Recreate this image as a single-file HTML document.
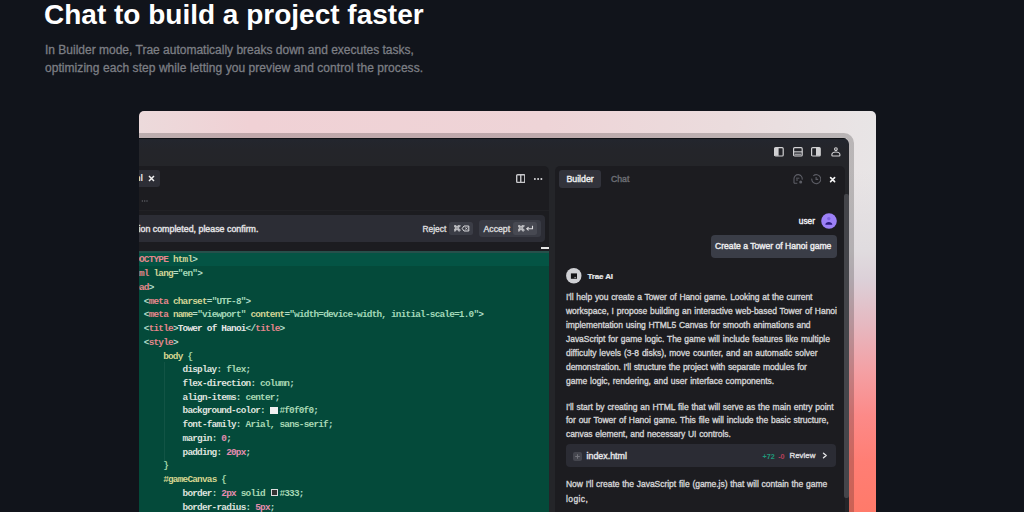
<!DOCTYPE html>
<html><head><meta charset="utf-8">
<style>
*{margin:0;padding:0;box-sizing:border-box}
html,body{width:1024px;height:512px;overflow:hidden;background:#11141b;font-family:"Liberation Sans",sans-serif}
.a{position:absolute}
#h1{left:44px;top:-1px;font-size:28px;font-weight:bold;color:#fff;white-space:nowrap;line-height:32px}
.sub{left:45px;font-size:12px;color:#7c7e84;white-space:nowrap;line-height:14px;-webkit-text-stroke:0.3px #7c7e84}
#card{left:139px;top:111px;width:737px;height:420px;border-radius:5px;overflow:hidden;
 background:linear-gradient(90deg,#ecdadb 0%,#f0d1d5 15%,#eed4d7 55%,#ebdcdd 80%,#e8e5e6 100%);}
#card:after{content:"";position:absolute;left:0;top:0;right:0;bottom:0;
 background:linear-gradient(180deg,rgba(222,218,221,0) 60px,#e0dcdf 139px,#dcd0d8 169px,#e6b8c0 214px,#f4a0a4 260px,#fc8a88 305px,#ff7e74 351px,#ff7a6a 401px)}
#win{left:-30px;top:22px;width:745px;height:420px;border:5px solid rgba(0,0,0,.2);border-radius:10px;z-index:2;background:transparent}
#wi{position:absolute;left:0;top:0;right:0;bottom:0;background:linear-gradient(180deg,#23262e 0,#24252a 12px,#242529 26px);border-radius:6px 6px 0 0;overflow:hidden}
#pg{position:absolute;left:-114px;top:-138px;width:1024px;height:512px}
.pan{position:absolute;background:#1c1c20;border-radius:4px}
.code{position:absolute;font-family:"Liberation Mono",monospace;font-size:9.4px;letter-spacing:-0.78px;font-weight:bold;line-height:13.74px;white-space:pre;color:#d6dad6}
.t{color:#e5868c}.at{color:#d2d596}.s{color:#a3d9b9}.n{color:#e58db0}.p{color:#dfe3df}.v{color:#a8d8b4}.sel{color:#d6d690}.br{color:#9fd4a6}.w{color:#e6e6e6}.g{color:#b0dccb}
.sw1,.sw2{display:inline-block;width:7.4px;height:7.4px;margin:0 1.5px 0 0.7px;vertical-align:-0.6px}
.sw1{background:#f0f0f0}.sw2{background:#333;border:1px solid #ddd}
.chat{position:absolute;left:566px;font-size:8.5px;word-spacing:0.5px;color:#d2d2d4;white-space:nowrap;line-height:11px;-webkit-text-stroke:0.35px #d2d2d4}
.md{-webkit-text-stroke:0.4px currentColor}
.wt{color:#e8e8ea;font-weight:bold}
</style></head><body>
<div id="h1" class="a">Chat to build a project faster</div>
<div class="a sub" style="top:43px">In Builder mode, Trae automatically breaks down and executes tasks,</div>
<div class="a sub" style="top:60.5px;letter-spacing:0.055px">optimizing each step while letting you preview and control the process.</div>

<div id="card" class="a">
 <div id="win" class="a">
  <div id="wi">
   <div id="pg">
    <div class="a" style="left:0;top:138px;width:1024px;height:1px;background:#101216"></div>
    <!-- title bar icons -->
    <svg class="a" style="left:773.5px;top:146.5px" width="10" height="10" viewBox="0 0 10 10"><rect x="0.6" y="0.6" width="8.6" height="8.4" rx="1.1" fill="none" stroke="#d2d2d4" stroke-width="1.2"/><rect x="0.6" y="0.8" width="4" height="8" fill="#cfcfd1"/></svg>
    <svg class="a" style="left:792.5px;top:146.5px" width="10" height="10" viewBox="0 0 10 10"><rect x="0.6" y="0.6" width="8.6" height="8.4" rx="1.1" fill="none" stroke="#d2d2d4" stroke-width="1.2"/><rect x="0.6" y="4.3" width="8.6" height="1.1" fill="#d2d2d4"/><rect x="1.5" y="6.6" width="6.8" height="1.6" fill="#9a9a9e"/></svg>
    <svg class="a" style="left:811.2px;top:146.5px" width="10" height="10" viewBox="0 0 10 10"><rect x="0.6" y="0.6" width="8.6" height="8.4" rx="1.1" fill="none" stroke="#d2d2d4" stroke-width="1.2"/><rect x="5" y="0.8" width="4.2" height="8" fill="#cfcfd1"/></svg>
    <svg class="a" style="left:830.5px;top:147px" width="10" height="10" viewBox="0 0 10 10"><circle cx="4.9" cy="2.1" r="1.35" fill="none" stroke="#d2d2d4" stroke-width="1.1"/><path d="M0.8 8 C0.8 5.6 2.8 5 4.9 5 C7 5 9 5.6 9 8 Q9 9 8 9 H1.8 Q0.8 9 0.8 8Z" fill="none" stroke="#d2d2d4" stroke-width="1.1"/></svg>

    <!-- editor panel -->
    <div class="pan" style="left:100px;top:165.6px;width:449px;height:400px;border-radius:5px"></div>
    <div class="a" style="left:100px;top:170px;width:60.4px;height:16.8px;background:#2d2e36;border-radius:3px"></div>
    <div class="a wt" style="left:132.5px;top:173px;font-size:9px;line-height:11px">ml</div>
    <svg class="a" style="left:148px;top:175px" width="7" height="7" viewBox="0 0 7 7"><path d="M1 1L6 6M6 1L1 6" stroke="#f0f0f0" stroke-width="1.5"/></svg>
    <svg class="a" style="left:141px;top:199px" width="8" height="4" viewBox="0 0 8 4"><circle cx="1.4" cy="2" r="0.75" fill="#606166"/><circle cx="3.7" cy="2" r="0.75" fill="#606166"/><circle cx="6" cy="2" r="0.75" fill="#606166"/></svg>
    <div class="a" style="left:100px;top:210px;width:449px;height:1px;background:#212125"></div>
    <svg class="a" style="left:515.8px;top:173.8px" width="9.5" height="9.2" viewBox="0 0 9.5 9.2"><rect x="0.7" y="0.7" width="8.1" height="7.8" rx="0.9" fill="none" stroke="#c8c8cb" stroke-width="1.4"/><rect x="4.05" y="1" width="1.4" height="7.2" fill="#c8c8cb"/></svg>
    <svg class="a" style="left:533px;top:176.5px" width="10" height="4" viewBox="0 0 10 4"><circle cx="1.9" cy="2" r="1" fill="#dadadc"/><circle cx="5.1" cy="2" r="1" fill="#dadadc"/><circle cx="8.4" cy="2" r="1" fill="#dadadc"/></svg>

    <!-- notification -->
    <div class="a" style="left:100px;top:215.2px;width:445px;height:26.5px;background:#2c2d35;border-radius:4px"></div>
    <div class="a md" style="left:138.5px;top:222.8px;font-size:8.85px;line-height:12px;color:#e2e2e4">ion completed, please confirm.</div>
    <div class="a md" style="left:422.5px;top:222.8px;font-size:8.4px;line-height:12px;color:#d8d8da">Reject</div>
    <div class="a" style="left:449.4px;top:222.2px;width:23.5px;height:12.5px;background:#3b3d46;border-radius:2.5px"></div>
    <svg class="a" style="left:453.5px;top:225px" width="16" height="7" viewBox="0 0 16 7"><path d="M1.9 1.9H4.1V4.1H1.9Z M1.9 1.9A0.9 0.9 0 1 0 1.9 1.9M1.9 1.9V0.9A1 1 0 1 0 0.9 1.9H1.9 M4.1 1.9V0.9A1 1 0 1 1 5.1 1.9H4.1 M1.9 4.1V5.1A1 1 0 1 1 0.9 4.1H1.9 M4.1 4.1V5.1A1 1 0 1 0 5.1 4.1H4.1" fill="none" stroke="#dcdcde" stroke-width="1"/><path d="M8.2 3.5L10 1H14.8V6H10Z" fill="none" stroke="#dcdcde" stroke-width="1"/><path d="M11.3 2.4L13.3 4.6M13.3 2.4L11.3 4.6" stroke="#dcdcde" stroke-width="0.8"/></svg>
    <div class="a" style="left:479px;top:220px;width:62px;height:17px;background:#393b44;border-radius:3px"></div>
    <div class="a md" style="left:483.5px;top:222.8px;font-size:8.7px;line-height:12px;color:#d8d8da">Accept</div>
    <div class="a" style="left:513.3px;top:222.2px;width:23.7px;height:12.5px;background:#474952;border-radius:2.5px"></div>
    <svg class="a" style="left:517.5px;top:225px" width="16" height="7" viewBox="0 0 16 7"><path d="M1.9 1.9H4.1V4.1H1.9Z M1.9 1.9A0.9 0.9 0 1 0 1.9 1.9M1.9 1.9V0.9A1 1 0 1 0 0.9 1.9H1.9 M4.1 1.9V0.9A1 1 0 1 1 5.1 1.9H4.1 M1.9 4.1V5.1A1 1 0 1 1 0.9 4.1H1.9 M4.1 4.1V5.1A1 1 0 1 0 5.1 4.1H4.1" fill="none" stroke="#dcdcde" stroke-width="1"/><path d="M14.5 0.8V3.8H9" fill="none" stroke="#dcdcde" stroke-width="1.1"/><path d="M10.6 2.2L8.8 3.8L10.6 5.4" fill="none" stroke="#dcdcde" stroke-width="1.1"/></svg>
    <div class="a" style="left:541px;top:247px;width:8px;height:2px;background:#e6e6e6"></div>

    <!-- code -->
    <div class="a" style="left:100px;top:251px;width:449px;height:300px;background:#044a3a"></div>
    <div class="a" style="left:100px;top:251px;width:449px;height:14.5px;background:#045444"></div>
    <div class="a" style="left:100px;top:251px;width:449px;height:1.5px;background:#26504b"></div>
    <div class="a" style="left:164px;top:362px;width:1px;height:100px;background:rgba(255,255,255,.06)"></div>
    <div class="code" style="left:124.4px;top:253.4px"><span class="g">&lt;!</span><span class="t">DOCTYPE</span><span class="g"> </span><span class="at">html</span><span class="g">&gt;</span>
<span class="g">&lt;</span><span class="t">html</span><span class="g"> </span><span class="at">lang</span><span class="g">=</span><span class="s">"en"</span><span class="g">&gt;</span>
<span class="g">&lt;</span><span class="t">head</span><span class="g">&gt;</span>
    <span class="g">&lt;</span><span class="t">meta</span><span class="g"> </span><span class="at">charset</span><span class="g">=</span><span class="s">"UTF-8"</span><span class="g">&gt;</span>
    <span class="g">&lt;</span><span class="t">meta</span><span class="g"> </span><span class="at">name</span><span class="g">=</span><span class="s">"viewport"</span><span class="g"> </span><span class="at">content</span><span class="g">=</span><span class="s">"width=device-width, initial-scale=1.0"</span><span class="g">&gt;</span>
    <span class="g">&lt;</span><span class="t">title</span><span class="g">&gt;</span><span class="w">Tower of Hanoi</span><span class="g">&lt;/</span><span class="t">title</span><span class="g">&gt;</span>
    <span class="g">&lt;</span><span class="t">style</span><span class="g">&gt;</span>
        <span class="sel">body</span><span class="g"> </span><span class="br">{</span>
            <span class="p">display</span><span class="g">: </span><span class="v">flex</span><span class="g">;</span>
            <span class="p">flex-direction</span><span class="g">: </span><span class="v">column</span><span class="g">;</span>
            <span class="p">align-items</span><span class="g">: </span><span class="v">center</span><span class="g">;</span>
            <span class="p">background-color</span><span class="g">: </span><i class="sw1"></i><span class="v">#f0f0f0</span><span class="g">;</span>
            <span class="p">font-family</span><span class="g">: </span><span class="v">Arial, sans-serif</span><span class="g">;</span>
            <span class="p">margin</span><span class="g">: </span><span class="n">0</span><span class="g">;</span>
            <span class="p">padding</span><span class="g">: </span><span class="n">20px</span><span class="g">;</span>
        <span class="br">}</span>
        <span class="sel">#gameCanvas</span><span class="g"> </span><span class="br">{</span>
            <span class="p">border</span><span class="g">: </span><span class="n">2px</span><span class="g"> </span><span class="v">solid</span><span class="g"> </span><i class="sw2"></i><span class="v">#333</span><span class="g">;</span>
            <span class="p">border-radius</span><span class="g">: </span><span class="n">5px</span><span class="g">;</span></div>

    <!-- chat panel -->
    <div class="pan" style="left:555px;top:165.6px;width:290px;height:400px;border-radius:5px"></div>
    <div class="a" style="left:558.6px;top:170.3px;width:42.6px;height:17.6px;background:#32333b;border-radius:3px"></div>
    <div class="a md" style="left:566.4px;top:174.2px;font-size:8.8px;line-height:11px;color:#ececee">Builder</div>
    <div class="a md" style="left:611px;top:174.2px;font-size:8.7px;line-height:11px;color:#6c6d73">Chat</div>
    <svg class="a" style="left:793px;top:174.2px" width="10" height="10" viewBox="0 0 10 10"><path d="M1 9.3V5A4.1 4.1 0 1 1 9.1 5.6" fill="none" stroke="#5c5d65" stroke-width="1.1"/><path d="M1 9.3H4.3" stroke="#5c5d65" stroke-width="1.1"/><path d="M3 4.2H6.4M3 6H5" stroke="#5c5d65" stroke-width="1"/><circle cx="7.7" cy="7.9" r="1.5" fill="#5c5d65"/></svg>
    <svg class="a" style="left:810.8px;top:174.2px" width="10.5" height="10.5" viewBox="0 0 10.5 10.5"><path d="M0.8 4.6A4.5 4.5 0 1 0 2.3 1.8" fill="none" stroke="#5c5d65" stroke-width="1.1"/><path d="M5.1 2.9V5.4H7.2" fill="none" stroke="#5c5d65" stroke-width="1.1"/></svg>
    <svg class="a" style="left:829px;top:175.7px" width="7" height="7" viewBox="0 0 7 7"><path d="M1.6 1.6L5.6 5.6M5.6 1.6L1.6 5.6" stroke="#f4f4f4" stroke-width="1.6" stroke-linecap="round"/></svg>
    <div class="a" style="left:844.2px;top:193.5px;width:4.4px;height:304.5px;background:#44454a;border-radius:2px"></div>

    <div class="a md" style="left:798.8px;top:216.3px;font-size:8.3px;line-height:11px;color:#f0f0f2">user</div>
    <svg class="a" style="left:821.2px;top:213.4px" width="16" height="16" viewBox="0 0 16 16"><circle cx="8" cy="8" r="7.8" fill="#9c80f6"/><circle cx="7.8" cy="5.6" r="1.7" fill="#7d62e0"/><path d="M4.3 11.8 C4.3 8.2 11.3 8.2 11.3 11.8Z" fill="#2b1a7e"/></svg>
    <div class="a" style="left:710.5px;top:234.8px;width:126.3px;height:23px;background:#3a3d47;border-radius:4px"></div>
    <div class="a md" style="left:715px;top:241px;font-size:8.6px;line-height:11px;color:#ececee">Create a Tower of Hanoi game</div>

    <svg class="a" style="left:565.8px;top:268px" width="16" height="16" viewBox="0 0 16 16"><circle cx="7.8" cy="7.8" r="7.7" fill="#cfd0d4"/><rect x="4.9" y="5.4" width="6.1" height="5.4" fill="#141417"/><rect x="8.3" y="8.9" width="1.8" height="1.3" fill="#8a8a8e"/></svg>
    <div class="a wt md" style="left:587.5px;top:270.8px;font-size:8px;line-height:11px;letter-spacing:-0.15px;-webkit-text-stroke:0.2px #e8e8ea">Trae AI</div>


    <div class="a" style="left:566.3px;top:444px;width:270px;height:23px;background:#2b2c34;border-radius:4px"></div>
    <svg class="a" style="left:573px;top:451.5px" width="9" height="9" viewBox="0 0 9 9"><rect x="0" y="0" width="9" height="9" rx="2" fill="#45464e"/><path d="M4.5 2.2v4.6M2.2 4.5h4.6" stroke="#73747b" stroke-width="1"/></svg>
    <div class="a md" style="left:586.5px;top:450.8px;font-size:8.9px;line-height:11px;color:#e4e4e6">index.html</div>
    <div class="a" style="left:762.5px;top:450.6px;font-size:7.2px;line-height:11px;font-weight:bold;color:#1f9a7b">+72</div>
    <div class="a" style="left:778.2px;top:450.6px;font-size:7.2px;line-height:11px;font-weight:bold;color:#b8405a">-0</div>
    <div class="a md" style="left:789.5px;top:450px;font-size:7.9px;line-height:11px;color:#d6d6d8">Review</div>
    <svg class="a" style="left:822px;top:452px" width="6" height="7" viewBox="0 0 6 7"><path d="M1.5 1.2L4.2 3.5L1.5 5.8" fill="none" stroke="#e4e4e6" stroke-width="1.4" stroke-linecap="round" stroke-linejoin="round"/></svg>

    <div class="chat" style="top:291.9px;letter-spacing:-0.067px">I'll help you create a Tower of Hanoi game. Looking at the current</div>
    <div class="chat" style="top:305.9px;letter-spacing:-0.026px">workspace, I propose building an interactive web-based Tower of Hanoi</div>
    <div class="chat" style="top:319.8px;letter-spacing:-0.055px">implementation using HTML5 Canvas for smooth animations and</div>
    <div class="chat" style="top:333.8px;letter-spacing:-0.038px">JavaScript for game logic. The game will include features like multiple</div>
    <div class="chat" style="top:347.8px;letter-spacing:-0.004px">difficulty levels (3-8 disks), move counter, and an automatic solver</div>
    <div class="chat" style="top:361.6px;letter-spacing:-0.100px">demonstration. I'll structure the project with separate modules for</div>
    <div class="chat" style="top:375.6px;letter-spacing:-0.006px">game logic, rendering, and user interface components.</div>
    <div class="chat" style="top:401.5px;letter-spacing:-0.033px">I'll start by creating an HTML file that will serve as the main entry point</div>
    <div class="chat" style="top:415.2px;letter-spacing:-0.027px">for our Tower of Hanoi game. This file will include the basic structure,</div>
    <div class="chat" style="top:429.0px;letter-spacing:-0.063px">canvas element, and necessary UI controls.</div>
    <div class="chat" style="top:479.4px;letter-spacing:-0.042px">Now I'll create the JavaScript file (game.js) that will contain the game</div>
    <div class="chat" style="top:493.5px;letter-spacing:0.400px">logic,</div>
   </div>
  </div>
 </div>
</div>
</body></html>
